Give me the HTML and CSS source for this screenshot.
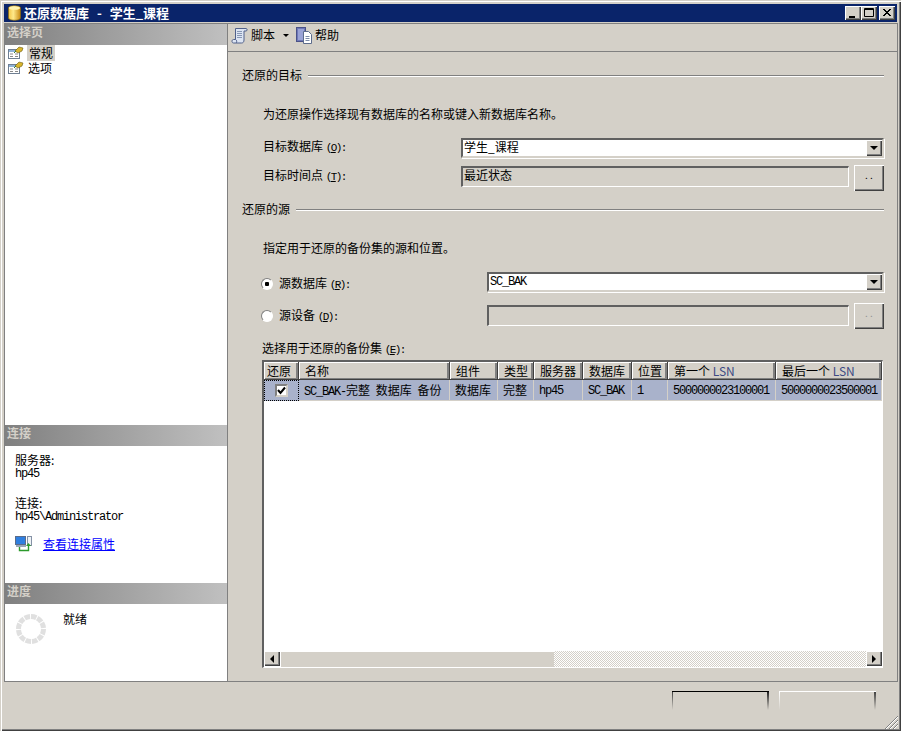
FILE: index.html
```html
<!DOCTYPE html>
<html lang="zh-CN">
<head>
<meta charset="utf-8">
<title>还原数据库 - 学生_课程</title>
<link rel="stylesheet" href="styles.css">
</head>
<body>
<div class="window">
  <header class="titlebar">
    <svg class="title-icon" width="13" height="16" viewBox="0 0 13 16"><defs><linearGradient id="db" x1="0" x2="1" y1="0" y2="0"><stop offset="0" stop-color="#f2c445"/><stop offset=".4" stop-color="#ffe98a"/><stop offset="1" stop-color="#c98a12"/></linearGradient></defs><path d="M.5 3c0-3 12-3 12 0v10c0 3-12 3-12 0z" fill="url(#db)" stroke="#8a6a10" stroke-width=".7"/><ellipse cx="6.500" cy="3" rx="5.500" ry="1.800" fill="#fff3b0"/></svg>
    <span class="title-text">还原数据库 - 学生_课程</span>
    <div class="win-buttons">
      <span class="win-btn"><svg width="16" height="14" viewBox="0 0 16 14"><rect x="4" y="10" width="6" height="2" fill="#000"/></svg></span>
      <span class="win-btn"><svg width="16" height="14" viewBox="0 0 16 14"><path d="M3.500 2.500h9v8h-9zM3 3.500h9" fill="none" stroke="#000"/></svg></span>
      <span class="win-btn win-close"><svg width="16" height="14" viewBox="0 0 16 14"><path d="M4 3l7 7M5 3l7 7M11 3l-7 7M12 3l-7 7" stroke="#000" fill="none"/></svg></span>
    </div>
  </header>
  <div class="main">
    <aside class="side">
      <section class="side-pages">
        <h2 class="side-head">选择页</h2>
        <ul class="page-list">
          <li class="page-item">
            <svg class="page-icon" width="16" height="14" viewBox="0 0 16 14"><rect x=".5" y="3.500" width="11" height="9" fill="#fff" stroke="#6f7f92"/><path d="M1 4h10v2H1z" fill="#8fb2d8"/><path d="M2 8h3M7 8h3M2 10.500h3M7 10.500h3" stroke="#8a8a8a"/><path d="M7 5l4-4 4 1-1 3-4 2z" fill="#d9b52c" stroke="#6b5a10" stroke-width=".6"/><path d="M6 7l2-2" stroke="#3a7a2a"/></svg>
            <span class="page-label page-current">常规</span>
          </li>
          <li class="page-item">
            <svg class="page-icon" width="16" height="14" viewBox="0 0 16 14"><rect x=".5" y="3.500" width="11" height="9" fill="#fff" stroke="#6f7f92"/><path d="M1 4h10v2H1z" fill="#8fb2d8"/><path d="M2 8h3M7 8h3M2 10.500h3M7 10.500h3" stroke="#8a8a8a"/><path d="M7 5l4-4 4 1-1 3-4 2z" fill="#d9b52c" stroke="#6b5a10" stroke-width=".6"/><path d="M6 7l2-2" stroke="#3a7a2a"/></svg>
            <span class="page-label">选项</span>
          </li>
        </ul>
      </section>
      <section class="side-conn">
        <h2 class="side-head">连接</h2>
        <div class="conn-body">
          <div class="conn-line">服务器:</div>
          <div class="conn-line conn-host lat">hp45</div>
          <div class="conn-line conn-gap">连接:</div>
          <div class="conn-line conn-host lat">hp45\Administrator</div>
          <div class="conn-link-row">
            <svg width="17" height="16" viewBox="0 0 17 16"><rect x=".5" y=".5" width="10" height="8" fill="#2f7fe0" stroke="#5a6c8a"/><rect x="1" y="9" width="10" height="2" fill="#9aa6b8"/><rect x="12.500" y=".5" width="4" height="9" fill="#eef2f6" stroke="#8592a6"/><path d="M4.500 11v3.500h9V9" fill="none" stroke="#2c9a2c" stroke-width="1.400"/><path d="M11 10h5l-2.500-3z" fill="#2c9a2c"/></svg>
            <a class="conn-link" href="#">查看连接属性</a>
          </div>
        </div>
      </section>
      <section class="side-progress">
        <h2 class="side-head">进度</h2>
        <div class="progress-body">
          <svg width="32" height="32" viewBox="0 0 32 32"><circle cx="16" cy="16" r="12.500" fill="none" stroke="#e0e0e0" stroke-width="5" stroke-dasharray="5.500 1"/></svg>
          <span class="progress-text">就绪</span>
        </div>
      </section>
    </aside>
    <main class="content">
      <div class="toolbar">
        <svg width="17" height="17" viewBox="0 0 17 17"><path d="M4.500 1.500h10.500c1.500 0 1.500 2.500 0 2.500h-2v9c0 2-1 3-2.500 3H2.500C.5 16 .5 12.500 2.500 12.500H4.500z" fill="#dde5f3" stroke="#50608a"/><path d="M6 4.500h5M6 6.500h5M6 8.500h5M6 10.500h5" stroke="#8796b4"/><path d="M4.500 12.500c1.500.5 1.500 3 .5 3.500" fill="none" stroke="#50608a"/></svg>
        <span class="tool-label">脚本</span>
        <span class="tool-caret"></span>
        <svg class="tool-help-icon" width="17" height="17" viewBox="0 0 17 17"><rect x=".5" y=".5" width="9" height="14" fill="#6f78b8" stroke="#4a5288"/><rect x="2" y="2" width="6" height="11" fill="#9aa3d6"/><path d="M7.500 4.500h5l3 3v9h-8z" fill="#fff" stroke="#5d6c8c"/><path d="M9.500 9.500h4M9.500 11.500h4M9.500 13.500h4" stroke="#7d8ca8"/></svg>
        <span class="tool-label">帮助</span>
      </div>
      <div class="pane">
        <div class="section-head"><span>还原的目标</span><i class="rule"></i></div>
        <p class="desc desc-a">为还原操作选择现有数据库的名称或键入新数据库名称。</p>
        <div class="form-row row-target">
          <label class="field-label label-target">目标数据库 <span class="acc">(<u>O</u>):</span></label>
          <div class="combo">
            <span class="combo-text combo-cjk">学生_课程</span>
            <span class="combo-btn"></span>
          </div>
        </div>
        <div class="form-row row-time">
          <label class="field-label label-target">目标时间点 <span class="acc">(<u>T</u>):</span></label>
          <div class="readonly">最近状态</div>
          <span class="dots-btn">. .</span>
        </div>
        <div class="section-head section-source"><span>还原的源</span><i class="rule"></i></div>
        <p class="desc desc-b">指定用于还原的备份集的源和位置。</p>
        <div class="form-row row-srcdb">
          <span class="radio radio-on"></span>
          <label class="field-label label-src">源数据库 <span class="acc">(<u>R</u>):</span></label>
          <div class="combo">
            <span class="combo-text lat">SC_BAK</span>
            <span class="combo-btn"></span>
          </div>
        </div>
        <div class="form-row row-srcdev">
          <span class="radio"></span>
          <label class="field-label label-src">源设备 <span class="acc">(<u>D</u>):</span></label>
          <div class="readonly"></div>
          <span class="dots-btn dots-off">. .</span>
        </div>
        <div class="grid-caption">选择用于还原的备份集 <span class="acc">(<u>E</u>):</span></div>
        <div class="table-frame">
          <div class="grid-row grid-header">
            <span class="hcell hcell-first">还原</span>
            <span class="hcell">名称</span>
            <span class="hcell">组件</span>
            <span class="hcell">类型</span>
            <span class="hcell">服务器</span>
            <span class="hcell">数据库</span>
            <span class="hcell">位置</span>
            <span class="hcell">第一个 <b class="lsn">LSN</b></span>
            <span class="hcell">最后一个 <b class="lsn">LSN</b></span>
          </div>
          <div class="grid-row grid-data">
            <span class="dcell check-cell"><span class="checkbox"><svg width="9" height="9" viewBox="0 0 9 9"><path d="M1 4l2.500 3L8 1.500" fill="none" stroke="#000" stroke-width="2"/></svg></span></span>
            <span class="dcell dcell-name"><span class="lat">SC_BAK-</span>完整 数据库 备份</span>
            <span class="dcell">数据库</span>
            <span class="dcell">完整</span>
            <span class="dcell dcell-lat lat">hp45</span>
            <span class="dcell dcell-lat lat">SC_BAK</span>
            <span class="dcell dcell-lat lat">1</span>
            <span class="dcell dcell-lat lat">5000000023100001</span>
            <span class="dcell dcell-lat lat">5000000023500001</span>
          </div>
          <div class="grid-empty"></div>
          <div class="hscroll">
            <span class="sbtn"><i class="arrow-left"></i></span>
            <span class="sthumb"></span>
            <span class="strack"></span>
            <span class="sbtn"><i class="arrow-right"></i></span>
          </div>
        </div>
      </div>
    </main>
  </div>
  <footer class="footer">
    <span class="ghost ghost-ok"></span>
    <span class="ghost ghost-cancel"></span>
    <svg class="grip" width="13" height="13" viewBox="0 0 13 13"><path d="M0 13L13 0M4 13L13 4M8 13l5-5" stroke="#808080" fill="none"/><path d="M1 13L13 1M5 13l8-8M9 13l4-4" stroke="#fff" fill="none"/></svg>
  </footer>
</div>
</body>
</html>
```

FILE: styles.css
```css
* { box-sizing: border-box; }
html, body { margin: 0; padding: 0; }
body {
  width: 901px;
  height: 731px;
  overflow: hidden;
  font: 12px/16px "Noto Sans CJK SC", "Liberation Sans", sans-serif;
  color: #000;
  background: #d4d0c8;
}
.lat {
  font-family: "Liberation Mono", "Noto Sans CJK SC", monospace;
  font-size: 12px;
  letter-spacing: -1.2px;
}
.acc {
  font-family: "Liberation Mono", monospace;
  font-size: 11px;
  letter-spacing: -1.6px;
}
.window {
  width: 901px;
  height: 731px;
  padding: 4px 3px 1px 4px;
  display: flex;
  flex-direction: column;
  background: #d4d0c8;
  box-shadow: inset 1px 1px 0 #d4d0c8, inset 2px 2px 0 #fff, inset -1px -1px 0 #404040, inset -2px -2px 0 #808080;
}
.titlebar {
  height: 18px;
  flex: none;
  margin-right: 1px;
  display: flex;
  align-items: center;
  padding-left: 4px;
  background: #0a246a;
  color: #fff;
  font-weight: 700;
}
.title-icon { flex: none; margin-right: 3px; }
.title-text { white-space: pre; font-size: 13px; word-spacing: 5px; }
.win-buttons { margin-left: auto; display: flex; padding-right: 2px; }
.win-btn {
  width: 16px;
  height: 14px;
  background: #d4d0c8;
  box-shadow: inset 1px 1px 0 #fff, inset -1px -1px 0 #404040, inset -2px -2px 0 #808080;
  display: block;
}
.win-btn svg { display: block; }
.win-close { margin-left: 2px; }
.main {
  flex: none;
  height: 659px;
  margin-top: 1px;
  display: flex;
  border-bottom: 1px solid #808080;
  border-right: 1px solid #808080;
  border-top: 1px solid #808080;
}
.side {
  width: 224px;
  flex: none;
  display: flex;
  flex-direction: column;
  background: #fff;
  border-left: 1px solid #808080;
  border-right: 1px solid #808080;
}
.side-head {
  margin: 0;
  height: 21px;
  padding-left: 2px;
  font-size: 12px;
  font-weight: 700;
  line-height: 16px;
  color: #d4d0c8;
  background: linear-gradient(90deg, #808080, #c0c0c0);
}
.side-pages { height: 401px; flex: none; }
.page-list { margin: 0; padding: 0; list-style: none; }
.page-item { height: 15.500px; display: flex; align-items: center; padding-left: 3px; }
.page-icon { flex: none; margin-right: 3px; }
.page-label { padding: 0 1px; height: 16px; }
.page-current { background: #d4d0c8; width: 28px; padding-left: 2px; }
.side-conn { height: 158px; flex: none; }
.conn-body { padding: 8px 0 0 10px; }
.conn-line { line-height: 12px; height: 12px; white-space: pre; }
.conn-gap { margin-top: 17px; }
.conn-host { margin-top: 2px; }
.conn-link-row { display: flex; align-items: center; gap: 11px; margin-top: 12px; height: 18px; }
.conn-link { color: #0000ff; text-decoration: underline; }
.side-progress { flex: 1; }
.progress-body { display: flex; padding: 9px 0 0 10px; align-items: flex-start; }
.progress-text { margin: -1px 0 0 16px; line-height: 14px; }
.content { flex: 1; display: flex; flex-direction: column; min-width: 0; }
.toolbar {
  height: 27px;
  flex: none;
  display: flex;
  align-items: center;
  padding: 0 0 5px 3px;
}
.tool-label { margin-left: 3px; }
.tool-help-icon + .tool-label { margin-left: 2px; }
.tool-caret {
  width: 0;
  height: 0;
  margin: 1px 0 0 8px;
  border: 3px solid transparent;
  border-top-color: #000;
  border-bottom-width: 0;
}
.tool-help-icon { margin-left: 7px; }
.pane {
  flex: 1;
  min-height: 0;
  border-top: 1px solid #808080;
  padding: 15px 13px 0 14px;
  display: flex;
  flex-direction: column;
}
.section-head { display: flex; align-items: center; gap: 6px; height: 16px; white-space: nowrap; flex: none; }
.section-source { margin-top: 10px; }
.rule {
  flex: 1;
  height: 2px;
  background: linear-gradient(#808080 50%, #fff 50%);
  margin-top: 1px;
}
.desc { margin: 23px 0 0; padding-left: 21px; height: 16px; flex: none; }
.form-row { display: flex; align-items: center; padding-left: 21px; flex: none; }
.row-target { height: 20px; margin-top: 16px; }
.row-time { height: 26px; margin-top: 7px; }
.row-srcdb { height: 20px; margin-top: 16px; padding-left: 19px; }
.row-srcdev { height: 26px; margin-top: 11px; padding-left: 19px; }
.field-label { flex: none; white-space: pre; }
.label-target { width: 198px; padding-bottom: 2px; }
.row-time .label-target { padding-bottom: 4px; }
.label-src { width: 208px; }
.row-srcdb .label-src { padding-top: 4px; }
.radio {
  flex: none;
  width: 12px;
  height: 12px;
  margin-right: 6px;
  border-radius: 50%;
  background: #fff;
  border: 1px solid #808080;
  border-right-color: #fff;
  border-bottom-color: #fff;
  box-shadow: 0 0 0 .5px #d4d0c8;
}
.row-srcdb .radio { margin-top: 4px; }
.radio-on { background: radial-gradient(circle, #000 2px, #fff 2.500px); }
.combo {
  flex: 1;
  height: 20px;
  display: flex;
  align-items: center;
  background: #fff;
  border: 2px solid;
  border-color: #606060 #d4d0c8 #d4d0c8 #606060;
  box-shadow: 1px 1px 0 #fff;
}
.combo-text { flex: 1; padding-left: 1px; }
.combo-cjk { margin-top: -2px; }
.combo-btn {
  flex: none;
  width: 16px;
  height: 16px;
  position: relative;
  background: #d4d0c8;
  box-shadow: inset 1px 1px 0 #fff, inset -1px -1px 0 #404040, inset -2px -2px 0 #808080;
}
.combo-btn::after {
  content: "";
  position: absolute;
  left: 4px;
  top: 6px;
  border: 4px solid transparent;
  border-top-color: #000;
  border-bottom-width: 0;
}
.readonly {
  flex: 1;
  height: 21px;
  align-self: flex-start;
  margin-top: 1px;
  padding: 0 0 0 1px;
  line-height: 14px;
  background: #d4d0c8;
  border: 1px solid;
  border-top-width: 2px;
  border-left-width: 2px;
  border-color: #606060 #fff #fff #606060;
}
.row-srcdev .readonly { margin-top: 2px; }
.dots-btn {
  flex: none;
  width: 30px;
  height: 26px;
  margin-left: 5px;
  text-align: center;
  line-height: 20px;
  font-size: 10px;
  background: #d4d0c8;
  box-shadow: inset 1px 1px 0 #fff, inset -1px -1px 0 #404040, inset -2px -2px 0 #808080;
}
.dots-off { color: #909090; }
.grid-caption { margin-top: 11px; padding-left: 20px; height: 16px; flex: none; }
.table-frame {
  width: 621px;
  height: 308px;
  margin: 4px 0 0 20px;
  flex: none;
  display: flex;
  flex-direction: column;
  background: #fff;
  border: 1px solid #fff;
  border-top: 2px solid #606060;
  border-left: 2px solid #606060;
}
.grid-row {
  display: grid;
  grid-template-columns: 35px 151px 48px 36px 49px 49px 36px 108px 106px;
  flex: none;
}
.grid-header { height: 18px; background: #d4d0c8; }
.hcell {
  padding-left: 6px;
  line-height: 17px;
  white-space: pre;
  box-shadow: inset 1px 1px 0 #fff, inset -1px -1px 0 #808080, inset -2px 0 0 #808080;
  border-right: 1px solid #404040;
  border-bottom: 1px solid #404040;
}
.hcell-first { padding-left: 3px; }
.lsn { font-weight: 400; color: #3c4a84; }
.grid-data { height: 21px; background: #a9b2cb; }
.dcell {
  padding-left: 5px;
  line-height: 20px;
  white-space: pre;
  overflow: hidden;
  border-right: 1px solid #d4d0c8;
  border-bottom: 1px solid #d4d0c8;
}
.dcell-lat { line-height: 22px; }
.dcell-name { word-spacing: 3px; }
.check-cell {
  display: flex;
  align-items: center;
  justify-content: center;
  padding: 0;
  border: 1px dotted #000;
}
.checkbox {
  width: 13px;
  height: 13px;
  display: flex;
  align-items: center;
  justify-content: center;
  background: #fff;
  border: 2px solid;
  border-color: #808080 #d4d0c8 #d4d0c8 #808080;
}
.checkbox svg { display: block; flex: none; }
.grid-empty { flex: 1; }
.hscroll { height: 16px; flex: none; display: flex; }
.sbtn {
  flex: none;
  width: 16px;
  height: 15px;
  display: flex;
  align-items: center;
  justify-content: center;
  background: #d4d0c8;
  box-shadow: inset 1px 1px 0 #fff, inset -1px -1px 0 #404040, inset -2px -2px 0 #808080;
}
.sthumb {
  width: 274px;
  flex: none;
  background: #d4d0c8;
  box-shadow: inset 1px 1px 0 #fff;
}
.strack {
  flex: 1;
  background: repeating-conic-gradient(#d4d0c8 0 25%, #fff 0 50%) 0 0 / 2px 2px;
}
.arrow-left, .arrow-right { width: 0; height: 0; border: 4px solid transparent; }
.arrow-left { border-right-color: #000; border-left-width: 0; }
.arrow-right { border-left-color: #000; border-right-width: 0; }
.footer {
  flex: 1;
  position: relative;
  display: flex;
  justify-content: flex-end;
  align-items: flex-start;
  gap: 10px;
  padding: 9px 22px 0 0;
}
.ghost {
  width: 97px;
  height: 19px;
  border-top: 1px solid;
  background:
    linear-gradient(var(--side), transparent) left top / 1px 100% no-repeat,
    linear-gradient(var(--end), transparent) right top / 2px 100% no-repeat;
}
.ghost-ok { --side: #404040; --end: #202020; border-top-color: #000; }
.ghost-cancel { --side: #fff; --end: #404040; border-top-color: #fff; }
.grip { position: absolute; right: 0; bottom: 1px; }
```
